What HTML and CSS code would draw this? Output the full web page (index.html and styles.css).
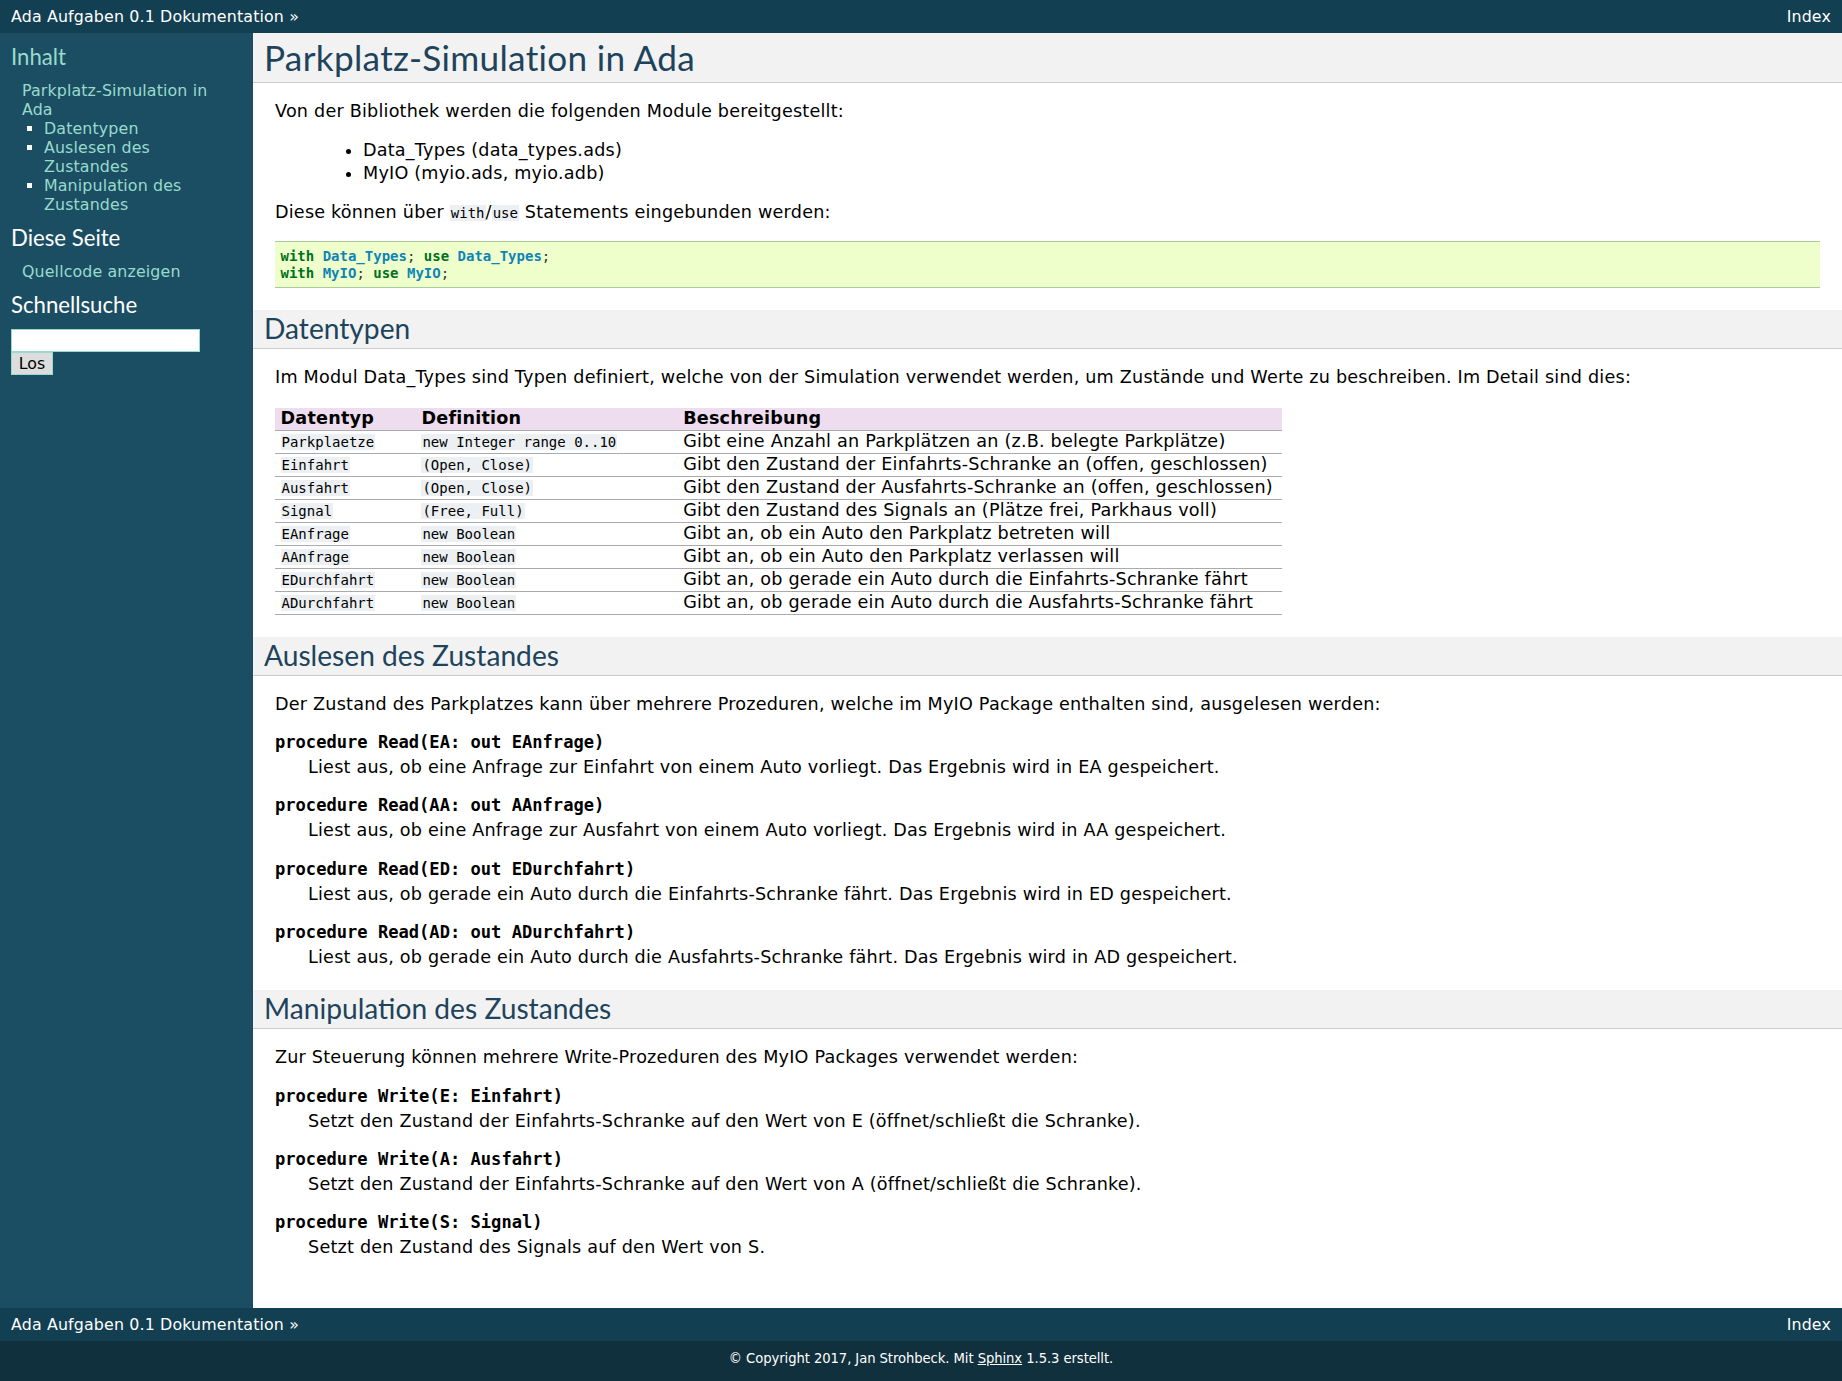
FILE: index.html
```html
<!DOCTYPE html>
<html lang="de">
<head>
<meta charset="utf-8">
<title>Parkplatz-Simulation in Ada — Ada Aufgaben 0.1 Dokumentation</title>
<link rel="stylesheet" href="styles.css">
</head>
<body>
<div class="related">
  <ul class="related-list">
    <li><a href="#">Ada Aufgaben 0.1 Dokumentation</a> »</li>
    <li class="right"><a href="#">Index</a></li>
  </ul>
</div>

<div class="document">
  <div class="sphinxsidebar">
    <div class="sidebarwrapper">
      <h3 class="side-h"><a href="#">Inhalt</a></h3>
      <ul class="toc">
        <li><a href="#">Parkplatz-Simulation in Ada</a>
          <ul class="toc-sub">
            <li><a href="#">Datentypen</a></li>
            <li><a href="#">Auslesen des Zustandes</a></li>
            <li><a href="#">Manipulation des Zustandes</a></li>
          </ul>
        </li>
      </ul>
      <h3 class="side-h">Diese Seite</h3>
      <ul class="toc">
        <li><a href="#">Quellcode anzeigen</a></li>
      </ul>
      <h3 class="side-h">Schnellsuche</h3>
      <form class="search">
        <div><input class="search-text" type="text" name="q"></div>
        <div><input class="search-btn" type="submit" value="Los"></div>
      </form>
    </div>
  </div>

  <div class="body">
    <div class="section">
      <h1 class="heading h1">Parkplatz-Simulation in Ada</h1>
      <p class="para">Von der Bibliothek werden die folgenden Module bereitgestellt:</p>
      <blockquote class="quote">
        <ul class="simple">
          <li class="para">Data_Types (data_types.ads)</li>
          <li class="para">MyIO (myio.ads, myio.adb)</li>
        </ul>
      </blockquote>
      <p class="para">Diese können über <code class="lit">with</code>/<code class="lit">use</code> Statements eingebunden werden:</p>
      <pre class="code"><span class="k">with</span> <span class="nn">Data_Types</span>; <span class="k">use</span> <span class="nn">Data_Types</span>;
<span class="k">with</span> <span class="nn">MyIO</span>; <span class="k">use</span> <span class="nn">MyIO</span>;</pre>

      <div class="section">
        <h2 class="heading h2">Datentypen</h2>
        <p class="para">Im Modul Data_Types sind Typen definiert, welche von der Simulation verwendet werden, um Zustände und Werte zu beschreiben. Im Detail sind dies:</p>
        <table class="docutils">
          <colgroup><col width="14%"><col width="26%"><col width="60%"></colgroup>
          <thead>
            <tr><th>Datentyp</th><th>Definition</th><th>Beschreibung</th></tr>
          </thead>
          <tbody>
            <tr><td><code class="lit">Parkplaetze</code></td><td><code class="lit">new Integer range 0..10</code></td><td>Gibt eine Anzahl an Parkplätzen an (z.B. belegte Parkplätze)</td></tr>
            <tr><td><code class="lit">Einfahrt</code></td><td><code class="lit">(Open, Close)</code></td><td>Gibt den Zustand der Einfahrts-Schranke an (offen, geschlossen)</td></tr>
            <tr><td><code class="lit">Ausfahrt</code></td><td><code class="lit">(Open, Close)</code></td><td>Gibt den Zustand der Ausfahrts-Schranke an (offen, geschlossen)</td></tr>
            <tr><td><code class="lit">Signal</code></td><td><code class="lit">(Free, Full)</code></td><td>Gibt den Zustand des Signals an (Plätze frei, Parkhaus voll)</td></tr>
            <tr><td><code class="lit">EAnfrage</code></td><td><code class="lit">new Boolean</code></td><td>Gibt an, ob ein Auto den Parkplatz betreten will</td></tr>
            <tr><td><code class="lit">AAnfrage</code></td><td><code class="lit">new Boolean</code></td><td>Gibt an, ob ein Auto den Parkplatz verlassen will</td></tr>
            <tr><td><code class="lit">EDurchfahrt</code></td><td><code class="lit">new Boolean</code></td><td>Gibt an, ob gerade ein Auto durch die Einfahrts-Schranke fährt</td></tr>
            <tr><td><code class="lit">ADurchfahrt</code></td><td><code class="lit">new Boolean</code></td><td>Gibt an, ob gerade ein Auto durch die Ausfahrts-Schranke fährt</td></tr>
          </tbody>
        </table>
      </div>

      <div class="section">
        <h2 class="heading h2">Auslesen des Zustandes</h2>
        <p class="para">Der Zustand des Parkplatzes kann über mehrere Prozeduren, welche im MyIO Package enthalten sind, ausgelesen werden:</p>
        <dl class="func"><dt class="sig">procedure Read(EA: out EAnfrage)</dt><dd class="desc">Liest aus, ob eine Anfrage zur Einfahrt von einem Auto vorliegt. Das Ergebnis wird in EA gespeichert.</dd></dl>
        <dl class="func"><dt class="sig">procedure Read(AA: out AAnfrage)</dt><dd class="desc">Liest aus, ob eine Anfrage zur Ausfahrt von einem Auto vorliegt. Das Ergebnis wird in AA gespeichert.</dd></dl>
        <dl class="func"><dt class="sig">procedure Read(ED: out EDurchfahrt)</dt><dd class="desc">Liest aus, ob gerade ein Auto durch die Einfahrts-Schranke fährt. Das Ergebnis wird in ED gespeichert.</dd></dl>
        <dl class="func"><dt class="sig">procedure Read(AD: out ADurchfahrt)</dt><dd class="desc">Liest aus, ob gerade ein Auto durch die Ausfahrts-Schranke fährt. Das Ergebnis wird in AD gespeichert.</dd></dl>
      </div>

      <div class="section">
        <h2 class="heading h2">Manipulation des Zustandes</h2>
        <p class="para">Zur Steuerung können mehrere Write-Prozeduren des MyIO Packages verwendet werden:</p>
        <dl class="func"><dt class="sig">procedure Write(E: Einfahrt)</dt><dd class="desc">Setzt den Zustand der Einfahrts-Schranke auf den Wert von E (öffnet/schließt die Schranke).</dd></dl>
        <dl class="func"><dt class="sig">procedure Write(A: Ausfahrt)</dt><dd class="desc">Setzt den Zustand der Einfahrts-Schranke auf den Wert von A (öffnet/schließt die Schranke).</dd></dl>
        <dl class="func"><dt class="sig">procedure Write(S: Signal)</dt><dd class="desc">Setzt den Zustand des Signals auf den Wert von S.</dd></dl>
      </div>
    </div>
  </div>
</div>

<div class="related">
  <ul class="related-list">
    <li><a href="#">Ada Aufgaben 0.1 Dokumentation</a> »</li>
    <li class="right"><a href="#">Index</a></li>
  </ul>
</div>
<div class="footer">© Copyright 2017, Jan Strohbeck. Mit <a href="#">Sphinx</a> 1.5.3 erstellt.</div>
</body>
</html>
```

FILE: styles.css
```css
html, body {
  margin: 0;
  padding: 0;
}
body {
  font-family: "DejaVu Sans", sans-serif;
  font-size: 17.6px;
  background-color: #11303d;
  color: #000;
}
a {
  color: #355f7c;
  text-decoration: none;
}

/* related bars */
.related {
  background-color: #133f52;
  line-height: 33px;
  color: #fff;
  font-size: 15.84px;
  letter-spacing: 0.15px;
}
.related a { color: #fff; }
.related-list {
  margin: 0;
  padding: 0 0 0 11px;
  list-style: none;
  display: flex;
  justify-content: space-between;
}
.related-list .right { margin-right: 11px; }

/* document */
.document {
  background-color: #1c4e63;
  display: flex;
  align-items: stretch;
}
.sphinxsidebar {
  width: 253px;
  flex: 0 0 253px;
  font-size: 15.84px;
  letter-spacing: 0.13px;
  word-wrap: break-word;
}
.sidebarwrapper {
  padding: 11px 5.5px 0 11px;
}
.side-h {
  font-family: "Lato", "DejaVu Sans", sans-serif;
  color: #fff;
  font-size: 22.2px;
  font-weight: normal;
  letter-spacing: 0;
  line-height: 1.16;
  margin: 0;
  padding: 0;
}
.side-h a { color: #fff; }
.toc {
  margin: 11px;
  padding: 0;
  list-style: none;
  color: #fff;
}
.toc-sub {
  margin: 0 11px 0 22px;
  padding: 0;
  list-style: square;
  color: #fff;
}
.sphinxsidebar a { color: #98dbcc; }
.search { margin-top: 12px; }
.search-text {
  box-sizing: border-box;
  width: 189px;
  height: 23px;
  border: 1px solid #98dbcc;
  font-family: "DejaVu Sans", sans-serif;
  font-size: 15.84px;
  padding: 1px 2px;
  margin: 0;
  background: #fff;
}
.search-btn {
  box-sizing: border-box;
  border: 1px solid #98dbcc;
  font-family: "DejaVu Sans", sans-serif;
  font-size: 15.84px;
  letter-spacing: 0;
  padding: 1px 6px;
  margin: 0;
  width: 42px;
  height: 23px;
  background: #dddddd;
  color: #000;
}

.body {
  flex: 1 1 auto;
  min-width: 0;
  background-color: #fff;
  color: #000;
  padding: 0 22px 33px 22px;
  letter-spacing: 0.21px;
}

.heading {
  font-family: "Lato", "DejaVu Sans", sans-serif;
  background-color: #f2f2f2;
  font-weight: normal;
  color: #20435c;
  border-bottom: 1px solid #ccc;
  margin: 0 -22px 11px -22px;
  padding: 3.3px 0 3.3px 11px;
  letter-spacing: 0;
  line-height: 1.16;
}
.h1 {
  font-size: 35.2px;
  letter-spacing: 0.3px;
  line-height: 1.21;
}
.h2 {
  margin-top: 22px;
  font-size: 28.16px;
  line-height: 1.13;
}

.para {
  text-align: justify;
  line-height: 22.3px;
}
p.para { margin: 17px 0; }

.quote { margin: 17px 44px; }
.simple {
  margin: 0;
  padding-left: 44px;
}

code, pre {
  font-family: "DejaVu Sans Mono", monospace;
  letter-spacing: 0;
}
.lit {
  background-color: #ecf0f3;
  padding: 0 1px;
  font-size: 14px;
}
.code {
  padding: 5.5px;
  background-color: #eeffcc;
  color: #333;
  line-height: 120%;
  border: 1px solid #aacc99;
  border-left: none;
  border-right: none;
  font-size: 14px;
  margin: 14px 0;
}
.k { color: #007020; font-weight: bold; }
.nn { color: #0e84b5; font-weight: bold; }

table.docutils {
  border: 0;
  border-collapse: collapse;
  line-height: 19.8px;
  margin-top: 19px;
}
table.docutils .lit {
  line-height: 14px;
}
table.docutils th, table.docutils td {
  padding: 1.1px 8.8px 1.1px 5.5px;
  border: 0;
  border-bottom: 1px solid #aaa;
  text-align: left;
  vertical-align: top;
}
table.docutils th {
  background-color: #eeddee;
  font-weight: bold;
}

.func {
  margin: 18px 0 16.5px 0;
}
.sig {
  font-family: "DejaVu Sans Mono", monospace;
  font-weight: bold;
  font-size: 17.1px;
  letter-spacing: 0;
  line-height: 19.6px;
}
.desc {
  margin: 3.3px 0 11px 33px;
  text-align: justify;
  line-height: 22.3px;
}

.footer {
  color: #fff;
  padding: 9.9px 0;
  text-align: center;
  font-size: 13.2px;
  letter-spacing: -0.08px;
}
.footer a {
  color: #fff;
  text-decoration: underline;
}
```
